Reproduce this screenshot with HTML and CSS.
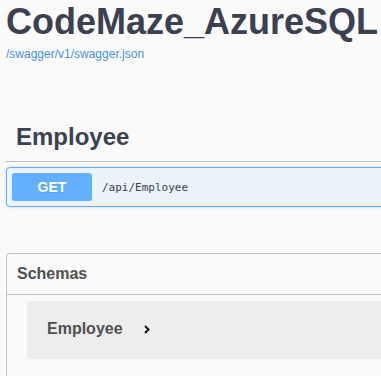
FILE: index.html
```html
<!doctype html>
<html lang="en">

<head>
    <meta charset="utf-8">
    <meta name="viewport" content="width=device-width, initial-scale=1.0">
    <title>CodeMaze_AzureSQL</title>
    <link rel="stylesheet" href="styles.css">
</head>

<body>
    <div class="wrapper">
        <!-- info -->
        <div class="info">
            <h1 class="title">CodeMaze_AzureSQL</h1>
            <a class="link" href="#">/swagger/v1/swagger.json</a>
        </div>

        <!-- operations -->
        <div class="tag-section">
            <h3 class="opblock-tag">Employee</h3>
            <div class="opblock opblock-get">
                <div class="opblock-summary">
                    <span class="method">GET</span>
                    <span class="path">/api/Employee</span>
                </div>
            </div>
        </div>

        <!-- schemas -->
        <section class="models">
            <h4 class="models-title">Schemas</h4>
            <div class="model-container">
                <span class="model-title">Employee</span>
                <svg class="arrow" width="6" height="9" viewBox="0 0 6 9">
                    <path d="M1 1 L4.5 4.5 L1 8" fill="none" stroke="#111" stroke-width="2" />
                </svg>
            </div>
        </section>
    </div>
</body>

</html>
```

FILE: styles.css
```css
/* base */
html,
body {
    margin: 0;
    background: #fafafa;
    overflow: hidden;
}

body {
    font-family: "Liberation Sans", Arial, sans-serif;
    color: #3b4151;
}

.wrapper {
    width: 1200px;
    padding: 0 6px;
}

/* info */
.info {
    display: flex;
    flex-direction: column;
    align-items: flex-start;
}

.title {
    margin: 0;
    padding-top: 1px;
    font-size: 36px;
    font-weight: 700;
    line-height: 41px;
    color: #3b4151;
}

.link {
    margin-top: 5px;
    font-size: 12px;
    line-height: 14px;
    color: #4990e2;
    text-decoration: none;
}

/* operations */
.tag-section {
    margin-top: 52px;
}

.opblock-tag {
    margin: 0 0 5px;
    padding: 10px 20px 10px 10px;
    font-size: 24px;
    font-weight: 700;
    line-height: 28px;
    border-bottom: 1px solid rgba(59, 65, 81, .3);
}

.opblock {
    border: 1px solid #61affe;
    border-radius: 4px;
    background: rgba(97, 175, 254, .1);
    box-shadow: 0 0 3px rgba(0, 0, 0, .19);
}

.opblock-summary {
    display: flex;
    align-items: center;
    padding: 5px;
}

.method {
    min-width: 80px;
    padding: 6px 0;
    border-radius: 3px;
    background: #61affe;
    color: #fff;
    font-size: 14px;
    font-weight: 700;
    line-height: 16px;
    text-align: center;
    text-shadow: 0 1px 0 rgba(0, 0, 0, .1);
}

.path {
    padding: 0 10px;
    font-family: "DejaVu Sans Mono", "Liberation Mono", monospace;
    font-size: 11px;
    font-weight: 400;
    color: #3b4151;
}

/* schemas */
.models {
    margin-top: 46px;
    height: 200px;
    border: 1px solid rgba(59, 65, 81, .3);
    border-radius: 4px;
}

.models-title {
    margin: 0;
    padding: 10px 20px 11px 10px;
    font-size: 16px;
    font-weight: 700;
    line-height: 19px;
    color: #505050;
    border-bottom: 1px solid rgba(59, 65, 81, .3);
}

.model-container {
    display: flex;
    align-items: center;
    gap: 21px;
    margin: 6px 20px 15px;
    padding: 19px 20px 21px;
    border-radius: 4px;
    background: rgba(0, 0, 0, .05);
}

.model-title {
    font-size: 16px;
    font-weight: 700;
    line-height: 18px;
    color: #505050;
}

.arrow {
    margin-top: 1px;
}
```
